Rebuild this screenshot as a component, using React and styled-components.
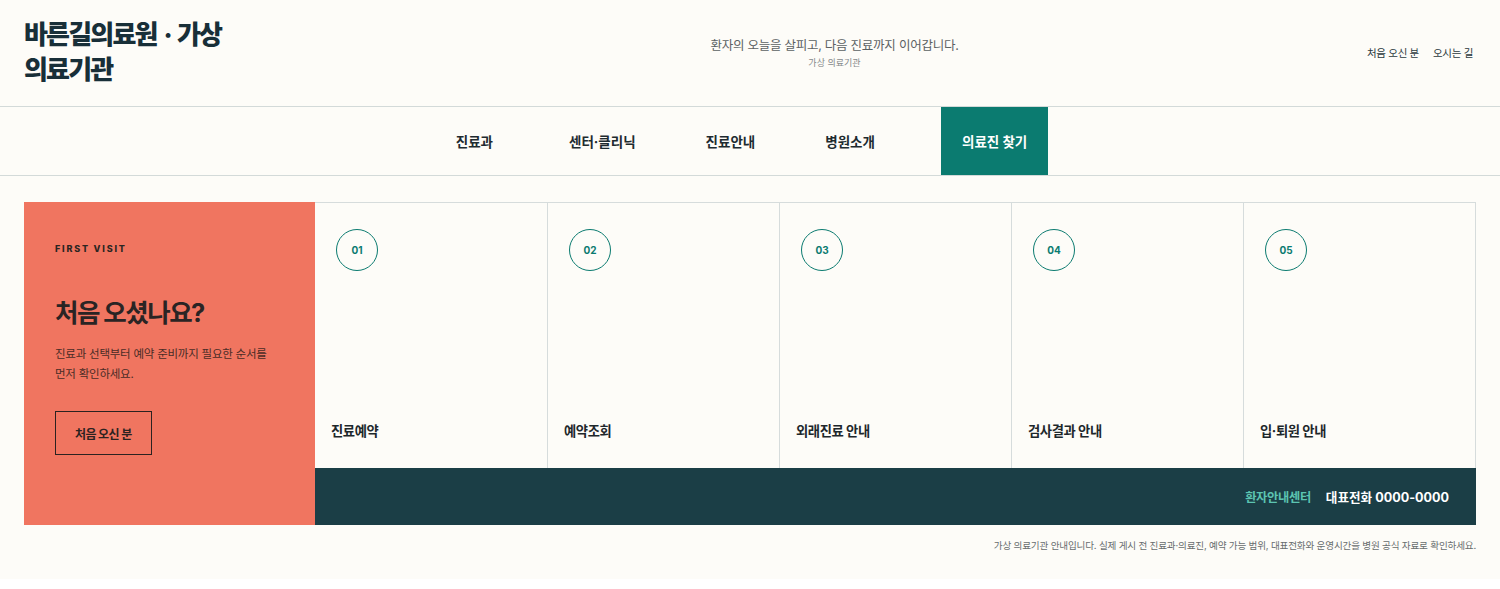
import React from "react";
import styled, { createGlobalStyle } from "styled-components";

const GlobalStyle = createGlobalStyle`
  html, body { margin: 0; padding: 0; background: #ffffff; }
  body {
    font-family: "Inter", "Noto Sans CJK KR", sans-serif;
    color: #1d2b30;
    -webkit-font-smoothing: antialiased;
  }
  * { box-sizing: border-box; }
`;

const Page = styled.div`
  background: #fdfcf8;
  padding-bottom: 26px;
`;

const Header = styled.header`
  display: flex;
  align-items: center;
  height: 107px;
  padding: 0 27px 0 24px;
  border-bottom: 1px solid #d3dad9;
`;

const Logo = styled.h1`
  margin: 0;
  width: 278px;
  font-size: 26px;
  line-height: 35px;
  font-weight: 800;
  letter-spacing: -0.07em;
  color: #182f38;
  padding-bottom: 2px;
`;

const LogoDot = styled.span`
  margin: 0 6px 0 7px;
`;

const Tagline = styled.div`
  flex: 1;
  display: flex;
  flex-direction: column;
  align-items: center;
  padding-top: 2px;
`;

const TagMain = styled.p`
  margin: 0;
  font-size: 12.5px;
  line-height: 16px;
  letter-spacing: -0.02em;
  color: #5b6163;
`;

const TagSub = styled.p`
  margin: 2px 0 0;
  font-size: 9px;
  line-height: 14px;
  color: #85898a;
`;

const Links = styled.nav`
  display: flex;
  gap: 14px;
  padding-bottom: 1px;
`;

const TopLink = styled.a`
  font-size: 10.5px;
  letter-spacing: -0.03em;
  color: #2b393d;
  text-decoration: none;
`;

const Nav = styled.nav`
  display: flex;
  justify-content: center;
  height: 69px;
  padding-right: 18px;
  border-bottom: 1px solid #d3dad9;
`;

const NavItem = styled.a`
  display: flex;
  align-items: center;
  padding: 0 ${(p) => (p.$active ? 21 : 22)}px;
  margin-left: ${(p) => p.$ml || 0}px;
  font-size: 13.5px;
  font-weight: 700;
  color: ${(p) => (p.$active ? "#ffffff" : "#1e2b30")};
  background: ${(p) => (p.$active ? "#0b7b70" : "transparent")};
  text-decoration: none;
  white-space: nowrap;
`;

const Main = styled.main`
  padding: 26px 24px 0;
`;

const Panel = styled.section`
  display: grid;
  grid-template-columns: 291px 1fr;
  height: 323px;
`;

const Intro = styled.div`
  background: #f07560;
  padding: 41px 31px 0;
  display: flex;
  flex-direction: column;
  align-items: flex-start;
`;

const Eyebrow = styled.span`
  font-size: 9px;
  line-height: 12px;
  font-weight: 800;
  letter-spacing: 0.2em;
  color: #2b2522;
`;

const IntroTitle = styled.h2`
  margin: 43px 0 0;
  font-size: 25.5px;
  line-height: 30px;
  font-weight: 700;
  letter-spacing: -0.06em;
  color: #2a2424;
`;

const IntroText = styled.p`
  margin: 16px 0 0;
  font-size: 11.5px;
  line-height: 20px;
  letter-spacing: -0.02em;
  color: #4a2c26;
`;

const OutlineButton = styled.button`
  margin-top: 27px;
  height: 44px;
  padding: 0 19px;
  background: transparent;
  border: 1px solid #2b2220;
  font-family: inherit;
  font-size: 12px;
  font-weight: 700;
  letter-spacing: -0.05em;
  color: #2b2220;
`;

const Side = styled.div`
  display: flex;
  flex-direction: column;
`;

const Steps = styled.div`
  flex: 1;
  display: grid;
  grid-template-columns: repeat(5, 1fr);
  border-top: 1px solid #d6dcdc;
  border-right: 1px solid #d6dcdc;
`;

const Step = styled.a`
  display: flex;
  flex-direction: column;
  justify-content: space-between;
  align-items: flex-start;
  padding: 26px 16px 28px;
  border-left: ${(p) => (p.$first ? "none" : "1px solid #d6dcdc")};
  text-decoration: none;
`;

const StepNum = styled.span`
  width: 42px;
  height: 42px;
  margin-left: 5px;
  border: 1px solid #0b7b70;
  border-radius: 50%;
  display: flex;
  align-items: center;
  justify-content: center;
  font-family: "Inter", sans-serif;
  font-size: 10px;
  font-weight: 700;
  color: #0b7b70;
`;

const StepLabel = styled.span`
  font-size: 13.3px;
  line-height: 18px;
  font-weight: 700;
  letter-spacing: -0.03em;
  color: #1d272b;
`;

const Bar = styled.div`
  height: 57px;
  background: #1b3e46;
  display: flex;
  align-items: center;
  justify-content: flex-end;
  gap: 15px;
  padding-right: 27px;
`;

const BarLabel = styled.span`
  font-size: 12.3px;
  font-weight: 700;
  letter-spacing: -0.03em;
  color: #5cc4b1;
`;

const BarPhone = styled.strong`
  font-size: 12.6px;
  font-weight: 700;
  color: #ffffff;
`;

const Note = styled.p`
  margin: 14px 0 0;
  text-align: right;
  font-size: 9.6px;
  line-height: 14px;
  letter-spacing: -0.02em;
  color: #686d6e;
`;

const navItems = [
  { label: "진료과", ml: 0 },
  { label: "센터·클리닉", ml: 32 },
  { label: "진료안내", ml: 26 },
  { label: "병원소개", ml: 26 },
  { label: "의료진 찾기", ml: 44, active: true },
];

const steps = ["진료예약", "예약조회", "외래진료 안내", "검사결과 안내", "입·퇴원 안내"];

export default function App() {
  return (
    <>
      <GlobalStyle />
      <Page>
        <Header>
          <Logo>
            바른길의료원<LogoDot>·</LogoDot>가상
            <br />
            의료기관
          </Logo>
          <Tagline>
            <TagMain>환자의 오늘을 살피고, 다음 진료까지 이어갑니다.</TagMain>
            <TagSub>가상 의료기관</TagSub>
          </Tagline>
          <Links>
            <TopLink href="#">처음 오신 분</TopLink>
            <TopLink href="#">오시는 길</TopLink>
          </Links>
        </Header>
        <Nav>
          {navItems.map((n) => (
            <NavItem key={n.label} href="#" $ml={n.ml} $active={n.active}>
              {n.label}
            </NavItem>
          ))}
        </Nav>
        <Main>
          <Panel>
            <Intro>
              <Eyebrow>FIRST VISIT</Eyebrow>
              <IntroTitle>처음 오셨나요?</IntroTitle>
              <IntroText>
                진료과 선택부터 예약 준비까지 필요한 순서를
                <br />
                먼저 확인하세요.
              </IntroText>
              <OutlineButton>처음 오신 분</OutlineButton>
            </Intro>
            <Side>
              <Steps>
                {steps.map((s, i) => (
                  <Step key={s} href="#" $first={i === 0}>
                    <StepNum>{String(i + 1).padStart(2, "0")}</StepNum>
                    <StepLabel>{s}</StepLabel>
                  </Step>
                ))}
              </Steps>
              <Bar>
                <BarLabel>환자안내센터</BarLabel>
                <BarPhone>대표전화 0000-0000</BarPhone>
              </Bar>
            </Side>
          </Panel>
          <Note>
            가상 의료기관 안내입니다. 실제 게시 전 진료과·의료진, 예약 가능 범위, 대표전화와 운영시간을 병원 공식 자료로 확인하세요.
          </Note>
        </Main>
      </Page>
    </>
  );
}
